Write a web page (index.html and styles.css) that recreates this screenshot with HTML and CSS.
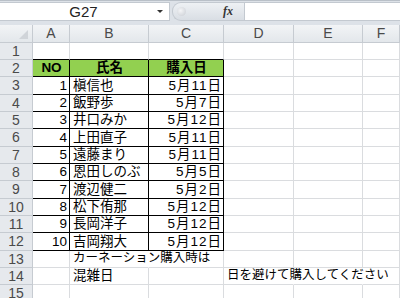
FILE: index.html
```html
<!DOCTYPE html>
<html lang="ja">
<head>
  <meta charset="UTF-8">
  <title>カーネーション購入日</title>
  <link rel="stylesheet" href="styles.css">
</head>
<body>
  <!-- 名前ボックスと数式バー -->
  <div class="formula-bar">
    <div class="name-box">
      <span class="name">G27</span>
      <span class="arrow"></span>
    </div>
    <div class="splitter"><span class="knob"></span></div>
    <div class="fx">fx</div>
    <div class="formula"></div>
  </div>

  <div class="sheet">
    <div class="corner"><span class="tri"></span></div>
    <div class="ch">A</div>
    <div class="ch">B</div>
    <div class="ch">C</div>
    <div class="ch">D</div>
    <div class="ch">E</div>
    <div class="ch">F</div>

    <!-- 1 -->
    <div class="rh">1</div>
    <div class="c top"></div><div class="c top"></div><div class="c top"></div><div class="c"></div><div class="c"></div><div class="c"></div>

    <!-- 2 見出し -->
    <div class="rh">2</div>
    <div class="c t hd">NO</div><div class="c t hd">氏名</div><div class="c t hd">購入日</div><div class="c"></div><div class="c"></div><div class="c"></div>

    <div class="rh">3</div>
    <div class="c t r">1</div><div class="c t">槇信也</div><div class="c t r d">5月11日</div><div class="c"></div><div class="c"></div><div class="c"></div>

    <div class="rh">4</div>
    <div class="c t r">2</div><div class="c t">飯野歩</div><div class="c t r d">5月7日</div><div class="c"></div><div class="c"></div><div class="c"></div>

    <div class="rh">5</div>
    <div class="c t r">3</div><div class="c t">井口みか</div><div class="c t r d">5月12日</div><div class="c"></div><div class="c"></div><div class="c"></div>

    <div class="rh">6</div>
    <div class="c t r">4</div><div class="c t">上田直子</div><div class="c t r d">5月11日</div><div class="c"></div><div class="c"></div><div class="c"></div>

    <div class="rh">7</div>
    <div class="c t r">5</div><div class="c t">遠藤まり</div><div class="c t r d">5月11日</div><div class="c"></div><div class="c"></div><div class="c"></div>

    <div class="rh">8</div>
    <div class="c t r">6</div><div class="c t">恩田しのぶ</div><div class="c t r d">5月5日</div><div class="c"></div><div class="c"></div><div class="c"></div>

    <div class="rh">9</div>
    <div class="c t r">7</div><div class="c t">渡辺健二</div><div class="c t r d">5月2日</div><div class="c"></div><div class="c"></div><div class="c"></div>

    <div class="rh">10</div>
    <div class="c t r">8</div><div class="c t">松下侑那</div><div class="c t r d">5月12日</div><div class="c"></div><div class="c"></div><div class="c"></div>

    <div class="rh">11</div>
    <div class="c t r">9</div><div class="c t">長岡洋子</div><div class="c t r d">5月12日</div><div class="c"></div><div class="c"></div><div class="c"></div>

    <div class="rh">12</div>
    <div class="c t r">10</div><div class="c t">吉岡翔大</div><div class="c t r d">5月12日</div><div class="c"></div><div class="c"></div><div class="c"></div>

    <!-- 13-14 メモ（はみ出し表示） -->
    <div class="rh">13</div>
    <div class="c"></div><div class="c spill">カーネーション購入時は</div><div class="c"></div><div class="c"></div><div class="c"></div><div class="c"></div>

    <div class="rh">14</div>
    <div class="c"></div><div class="c">混雑日</div><div class="c"></div><div class="c spill">日を避けて購入してください</div><div class="c spill"></div><div class="c"></div>

    <div class="rh">15</div>
    <div class="c"></div><div class="c"></div><div class="c"></div><div class="c"></div><div class="c"></div><div class="c"></div>
  </div>
</body>
</html>
```

FILE: styles.css
```css
body {
  margin: 0;
  background: #fff;
  font-family: "Liberation Sans", "Noto Sans CJK JP", sans-serif;
  overflow: hidden;
}

/* 数式バー */
.formula-bar {
  display: flex;
  height: 25px;
  box-sizing: border-box;
  padding: 1px 0 4px;
  background: #dde2e8;
  border-top: 1px solid #b9c0c8;
}

.name-box {
  display: flex;
  align-items: center;
  width: 170px;
  box-sizing: border-box;
  background: #fff;
  border: 1px solid #c3c9d0;
  border-left: none;
}

.name {
  flex: 1;
  text-align: center;
  font-size: 15px;
  color: #222;
  padding-left: 10px;
}

.arrow {
  width: 0;
  height: 0;
  margin-right: 6px;
  border-left: 3px solid transparent;
  border-right: 3px solid transparent;
  border-top: 3px solid #333;
}

.splitter {
  display: flex;
  align-items: center;
  width: 50px;
  background: linear-gradient(#eef1f4, #d9dee4);
  border-radius: 9px 0 0 9px;
  margin-left: 2px;
  border: 1px solid #c3c9d0;
  border-right: none;
}

.knob {
  width: 9px;
  height: 9px;
  margin-left: 4px;
  border-radius: 50%;
  background: radial-gradient(circle at 40% 40%, #f4f5f7, #c8ccd2);
}

.fx {
  width: 21px;
  background: linear-gradient(#eef1f4, #d9dee4);
  border-top: 1px solid #c3c9d0;
  border-bottom: 1px solid #c3c9d0;
  font-family: "Liberation Serif", serif;
  font-style: italic;
  font-weight: bold;
  font-size: 12px;
  line-height: 16px;
  color: #333;
}

.formula {
  flex: 1;
  background: #fff;
  border: 1px solid #c3c9d0;
  border-right: none;
}

/* シート */
.sheet {
  display: grid;
  grid-template-columns: 33px 37px 79px 75px 70px 69px 1fr;
  grid-template-rows: 18px repeat(5, 17px 17px 18px);
  background: #fff;
}

.corner,
.ch,
.rh {
  box-sizing: border-box;
  background: linear-gradient(#f2f4f6, #e3e7eb);
  color: #4a4a4a;
  font-size: 14px;
  border-right: 1px solid #c6cbd1;
  border-bottom: 1px solid #c6cbd1;
}

.corner {
  position: relative;
}

.tri {
  position: absolute;
  right: 4px;
  bottom: 3px;
  width: 0;
  height: 0;
  border-left: 9px solid transparent;
  border-bottom: 9px solid #d0d4d9;
}

.ch {
  text-align: center;
  line-height: 17px;
}

.rh {
  text-align: center;
  line-height: 17px;
  background: #e6e9ed;
}

.c {
  box-sizing: border-box;
  display: flex;
  align-items: flex-end;
  padding: 0 2px 1px 3px;
  font-size: 13.5px;
  line-height: 15px;
  color: #000;
  white-space: nowrap;
  border-right: 1px solid #dadcdf;
  border-bottom: 1px solid #dadcdf;
}

.c.top {
  border-bottom-color: #000;
}

.c.t {
  border-right-color: #000;
  border-bottom-color: #000;
}

.c.r {
  justify-content: flex-end;
}

.c.d {
  letter-spacing: 1px;
  padding-right: 1px;
}

.c.hd {
  justify-content: center;
  font-weight: bold;
  background: #92d050;
}

.c.spill {
  font-size: 12.5px;
  border-right-color: transparent;
}
```
